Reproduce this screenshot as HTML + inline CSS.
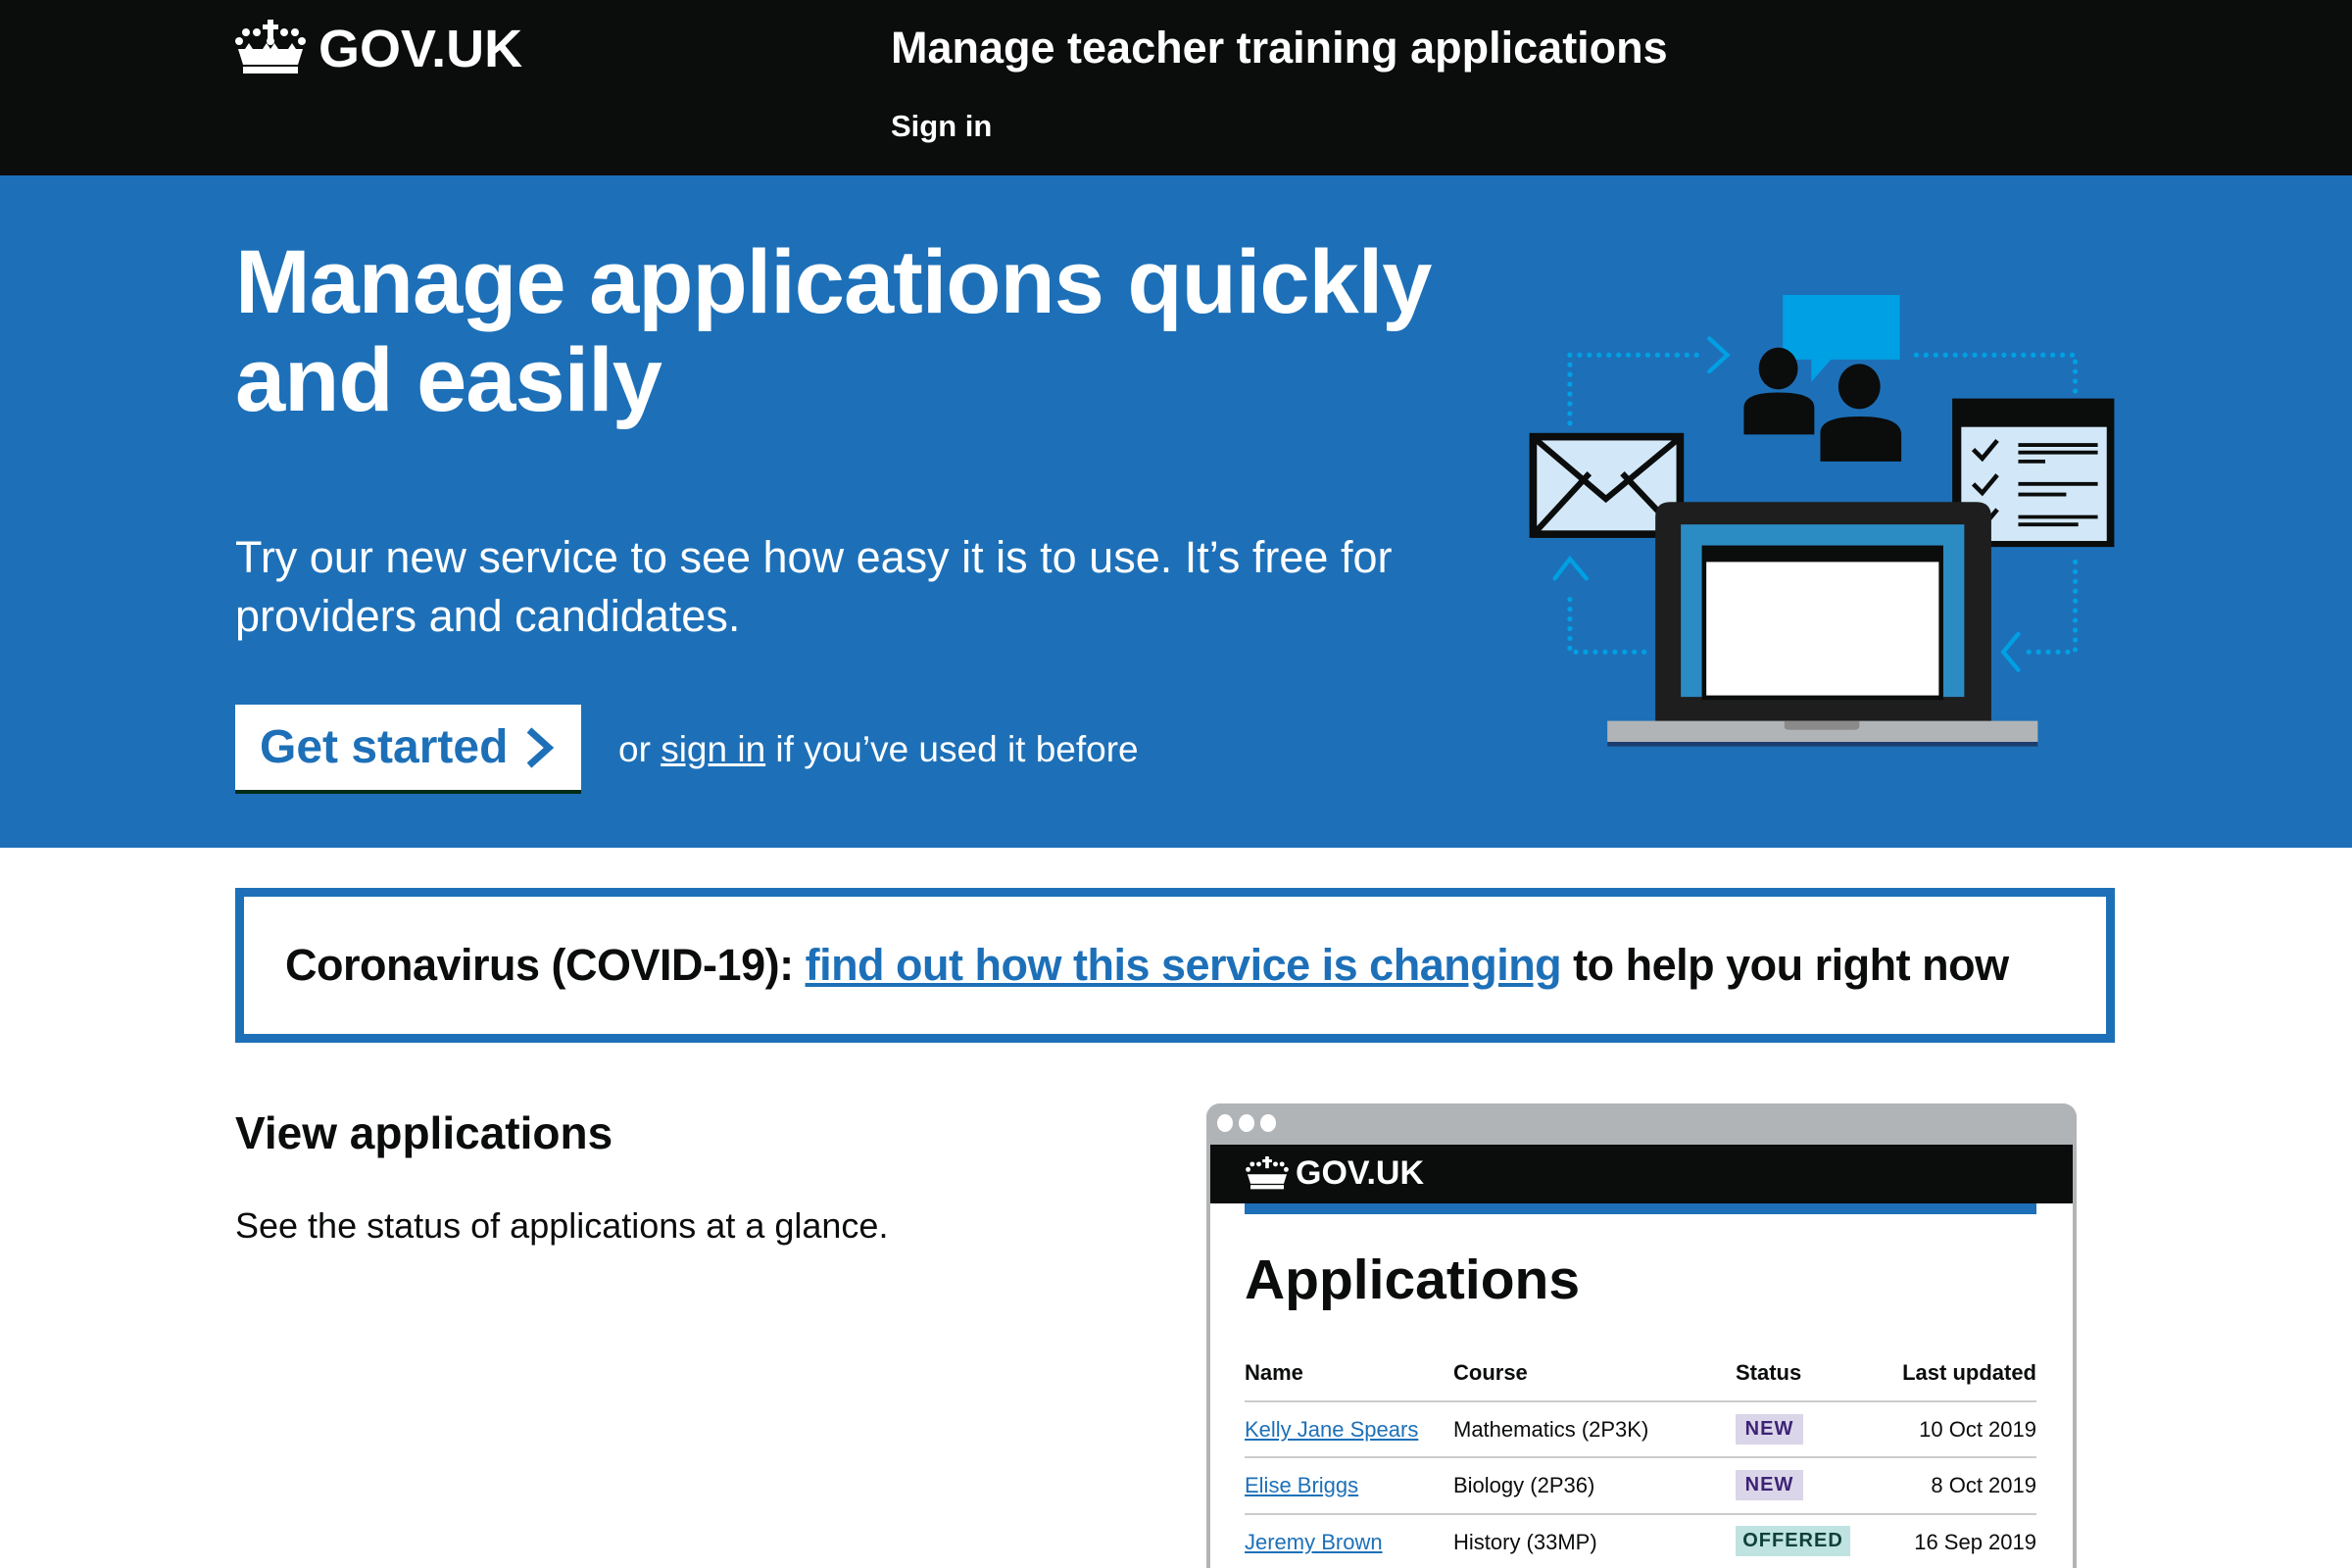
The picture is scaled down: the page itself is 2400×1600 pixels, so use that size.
<!DOCTYPE html>
<html><head><meta charset="utf-8"><style>
*{margin:0;padding:0;box-sizing:border-box}
html{width:2400px;height:1600px;overflow:hidden}
body{width:2400px;height:1600px;overflow:hidden;background:#fff;font-family:"Liberation Sans",Arial,sans-serif;color:#0b0c0c;position:relative}
.a{position:absolute;white-space:nowrap}
a{color:#1d70b8;text-decoration:underline}
</style></head><body>
<div class="a" style="left:0;top:0;width:2400px;height:179px;background:#0b0c0c"></div>
<svg class="a" style="left:240px;top:20px" width="72" height="56" viewBox="0 0 72 56" fill="#fff">
<rect x="33" y="0" width="6" height="20"/><rect x="28" y="5" width="16" height="5"/>
<circle cx="4" cy="22" r="4"/><circle cx="11" cy="13" r="4"/><circle cx="22" cy="13" r="4"/><circle cx="50" cy="13" r="4"/><circle cx="61" cy="13" r="4"/><circle cx="68" cy="22" r="4"/><circle cx="36" cy="22" r="4"/>
<path d="M3 30 L10 30 L14 24 L18 30 L28 30 L32 24 L36 30 L40 24 L44 30 L54 30 L58 24 L62 30 L69 30 L64 46 L8 46Z"/>
<rect x="8" y="48" width="56" height="7"/>
</svg>
<div class="a" style="left:325px;top:20px;font-size:54px;font-weight:bold;color:#fff;line-height:60px">GOV.UK</div>
<div class="a" style="left:909px;top:22px;font-size:45px;font-weight:bold;color:#fff;line-height:54px">Manage teacher training applications</div>
<div class="a" style="left:909px;top:110px;font-size:31px;font-weight:bold;color:#fff;line-height:38px">Sign in</div>

<div class="a" style="left:0;top:179px;width:2400px;height:686px;background:#1d70b8"></div>
<div class="a" style="left:240px;top:238px;font-size:92px;font-weight:bold;color:#fff;line-height:100px;letter-spacing:-1px">Manage applications quickly<br>and easily</div>
<div class="a" style="left:240px;top:539px;font-size:45px;color:#fff;line-height:60px">Try our new service to see how easy it is to use. It’s free for<br>providers and candidates.</div>
<div class="a" style="left:240px;top:719px;width:353px;height:87px;background:#fff;box-shadow:0 4px 0 #002d18"></div>
<div class="a" style="left:265px;top:738px;font-size:48px;font-weight:bold;color:#1d70b8;line-height:50px">Get started</div>
<svg class="a" style="left:532px;top:741px" width="36" height="44" viewBox="0 0 36 44"><path d="M8 4 L28 22 L8 40" stroke="#1d70b8" stroke-width="7" fill="none"/></svg>
<div class="a" style="left:631px;top:743px;font-size:37px;color:#fff;line-height:44px">or <a style="color:#fff">sign in</a> if you’ve used it before</div>

<svg class="a" style="left:1530px;top:275px" width="658" height="505" viewBox="1000 180 430 330">
<g stroke="#00a0e4" stroke-width="2.8" stroke-linecap="round" fill="none">
<path d="M1047 237 H1135 M1047 237 V285 M1047 400 V435 H1098 M1278 237 H1384 V265 M1384 375 V435 H1350" stroke-dasharray="0 6.5" stroke-width="3.4"/>
<path d="M1140 226 L1152 237 L1140 248"/><path d="M1037 386 L1047 373 L1058 386"/><path d="M1346 423 L1336 435 L1346 447"/>
</g>
<path d="M1189 197 H1267 V240 H1221 L1208 255 V240 H1189Z" fill="#00a0e4"/>
<ellipse cx="1186" cy="246" rx="13" ry="14" fill="#0b0c0c"/><path d="M1163 290 V272 Q1163 262 1186 262 Q1210 262 1210 272 V290Z" fill="#0b0c0c"/>
<ellipse cx="1240" cy="258" rx="14" ry="15" fill="#0b0c0c"/><path d="M1214 308 V289 Q1214 278 1240 278 Q1268 278 1268 290 V308Z" fill="#0b0c0c"/>
<rect x="1302" y="266" width="108" height="99" fill="#0b0c0c"/><rect x="1308" y="285" width="97" height="76" fill="#d2e8f8"/>
<g stroke="#0b0c0c" stroke-width="3" fill="none"><path d="M1316 300 l6 6 l10 -12 M1316 323 l6 6 l10 -12 M1316 346 l6 6 l10 -12"/><path d="M1346 297 h53 M1346 302 h53 M1346 308 h18 M1346 323 h53 M1346 330 h32 M1346 345 h53 M1346 350 h40" stroke-width="2.5"/></g>
<rect x="1020" y="289" width="103" height="70" fill="#0b0c0c"/><rect x="1025" y="294" width="93" height="60" fill="#d2e8f8"/>
<path d="M1025 294 L1071 333 L1118 294 M1025 354 L1060 316 M1118 354 L1082 316" stroke="#0b0c0c" stroke-width="4" fill="none"/>
<path d="M1104 482 V345 Q1104 335 1114 335 H1318 Q1328 335 1328 345 V482Z" fill="#1e1e1e"/>
<rect x="1121" y="350" width="189" height="115" fill="#2b8cc4"/>
<rect x="1135" y="364" width="161" height="103" fill="#0b0c0c"/><rect x="1138" y="375" width="155" height="89" fill="#fff"/>
<rect x="1072" y="481" width="287" height="14" fill="#b1b4b6"/><path d="M1190 481 H1240 V485 Q1240 487 1236 487 H1194 Q1190 487 1190 485Z" fill="#8a8a8a"/>
<rect x="1072" y="495" width="287" height="3" fill="#1b3d6e"/>
</svg>

<div class="a" style="left:240px;top:906px;width:1918px;height:158px;border:9px solid #1d70b8"></div>
<div class="a" style="left:291px;top:958px;font-size:45px;font-weight:bold;line-height:54px;letter-spacing:-0.5px">Coronavirus (COVID-19): <a>find out how this service is changing</a> to help you right now</div>

<div class="a" style="left:240px;top:1128px;font-size:46px;font-weight:bold;line-height:56px">View applications</div>
<div class="a" style="left:240px;top:1229px;font-size:36px;line-height:44px">See the status of applications at a glance.</div>

<div class="a" style="left:1231px;top:1126px;width:888px;height:474px;border:4px solid #b1b4b6;border-bottom:none;border-radius:14px 14px 0 0;background:#fff"></div>
<div class="a" style="left:1231px;top:1126px;width:888px;height:42px;background:#b1b4b6;border-radius:14px 14px 0 0"></div>
<div class="a" style="left:1242px;top:1137px;width:16px;height:18px;border-radius:50%;background:#fff"></div>
<div class="a" style="left:1264px;top:1137px;width:16px;height:18px;border-radius:50%;background:#fff"></div>
<div class="a" style="left:1286px;top:1137px;width:16px;height:18px;border-radius:50%;background:#fff"></div>
<div class="a" style="left:1235px;top:1168px;width:880px;height:60px;background:#0b0c0c"></div>
<svg class="a" style="left:1271px;top:1180px" width="44" height="34" viewBox="0 0 72 56" fill="#fff">
<rect x="33" y="0" width="6" height="20"/><rect x="28" y="5" width="16" height="5"/><circle cx="4" cy="22" r="4"/><circle cx="11" cy="13" r="4"/><circle cx="22" cy="13" r="4"/><circle cx="50" cy="13" r="4"/><circle cx="61" cy="13" r="4"/><circle cx="68" cy="22" r="4"/>
<path d="M3 30 L69 30 L64 46 L8 46Z"/><rect x="8" y="48" width="56" height="7"/></svg>
<div class="a" style="left:1322px;top:1178px;font-size:34px;font-weight:bold;color:#fff;line-height:38px">GOV.UK</div>
<div class="a" style="left:1270px;top:1228px;width:808px;height:11px;background:#1d70b8"></div>
<div class="a" style="left:1270px;top:1272px;font-size:57px;font-weight:bold;line-height:68px">Applications</div>
<div style="font-size:22px;font-weight:bold">
<div class="a" style="left:1270px;top:1388px">Name</div><div class="a" style="left:1483px;top:1388px">Course</div><div class="a" style="left:1771px;top:1388px">Status</div><div class="a" style="right:322px;top:1388px">Last updated</div></div>
<div class="a" style="left:1270px;top:1429px;width:808px;height:2px;background:#ccc"></div>
<div class="a" style="left:1270px;top:1486px;width:808px;height:2px;background:#ccc"></div>
<div class="a" style="left:1270px;top:1544px;width:808px;height:2px;background:#ccc"></div>
<div style="font-size:22px">
<div class="a" style="left:1270px;top:1446px"><a>Kelly Jane Spears</a></div><div class="a" style="left:1483px;top:1446px">Mathematics (2P3K)</div><div class="a" style="right:322px;top:1446px">10 Oct 2019</div>
<div class="a" style="left:1270px;top:1503px"><a>Elise Briggs</a></div><div class="a" style="left:1483px;top:1503px">Biology (2P36)</div><div class="a" style="right:322px;top:1503px">8 Oct 2019</div>
<div class="a" style="left:1270px;top:1561px"><a>Jeremy Brown</a></div><div class="a" style="left:1483px;top:1561px">History (33MP)</div><div class="a" style="right:322px;top:1561px">16 Sep 2019</div>
</div>
<div class="a" style="left:1771px;top:1443px;width:69px;height:31px;background:#dbd5e9;color:#3d2375;font-weight:bold;font-size:20px;line-height:31px;text-align:center;letter-spacing:1px">NEW</div>
<div class="a" style="left:1771px;top:1500px;width:69px;height:31px;background:#dbd5e9;color:#3d2375;font-weight:bold;font-size:20px;line-height:31px;text-align:center;letter-spacing:1px">NEW</div>
<div class="a" style="left:1771px;top:1557px;width:117px;height:31px;background:#bfe3e0;color:#10403c;font-weight:bold;font-size:20px;line-height:31px;text-align:center;letter-spacing:1px">OFFERED</div>
</body></html>
